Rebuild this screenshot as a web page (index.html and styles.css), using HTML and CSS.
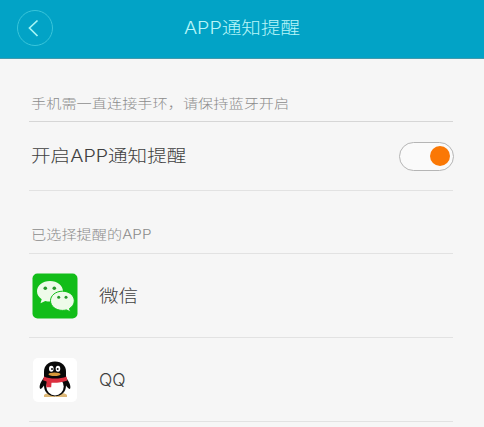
FILE: index.html
```html
<!DOCTYPE html>
<html lang="zh-CN">
<head>
<meta charset="utf-8">
<title>APP通知提醒</title>
<link rel="stylesheet" href="styles.css">
</head>
<body>
<header class="header">
  <svg class="back" viewBox="0 0 38 38"><circle cx="19" cy="19" r="17.5"/><path d="M21.5 11.5 13.5 19l8 8"/></svg>
  <h1 class="title"><span class="text">APP通知提醒</span></h1>
</header>
<main class="content">
  <p class="hint"><span class="text">手机需一直连接手环，请保持蓝牙开启</span></p>
  <div class="row setting"><span class="text">开启APP通知提醒</span><span class="toggle"><span class="knob"></span></span></div>
  <h2 class="section"><span class="text">已选择提醒的APP</span></h2>
  <div class="row app">
    <svg class="icon" viewBox="0 0 46 46">
      <rect x=".5" y=".5" width="45" height="45" rx="5" fill="#12bd19"/>
      <path d="M18 8C10.500 8 5 12.500 5 18.300c0 3.500 1.800 6 4.700 7.900l-1.200 4 4.800-2.300c1.500.4 3 .6 4.700.6 7.300 0 13-4.500 13-10.200S25.300 8 18 8z" fill="#eefbe9"/>
      <path d="M30.500 18.200c-6.700 0-12 4.200-12 9.600s5.300 9.600 12 9.600c1.400 0 2.700-.2 4-.5l4 2-1-3.400c3-1.800 4.800-4.500 4.800-7.700 0-5.400-5.200-9.600-11.800-9.600z" fill="#eefbe9" stroke="#12bd19"/>
      <g fill="#27972b"><circle cx="13.300" cy="15.300" r="1.800"/><circle cx="22.300" cy="15.300" r="1.800"/><circle cx="26.700" cy="24.300" r="1.500"/><circle cx="34" cy="24.300" r="1.500"/></g>
    </svg>
    <span class="text">微信</span>
  </div>
  <div class="row app">
    <svg class="icon" viewBox="0 0 46 46">
      <rect x="1" y="1" width="44" height="44" rx="5" fill="#fff"/>
      <path d="M12 38c2-2.500 7-2.500 10.500 0l1 2H12zM35 38c-2-2.500-7-2.500-10.500 0l-1 2H35z" fill="#ddb877"/>
      <path d="M12.500 20C9 24 6.800 29 8 31.500c.9 1.300 2.500-.8 4-3 0 6.500 4.500 10.800 11 10.800s11-4.300 11-10.800c1.500 2.200 3.300 4.300 4.200 3 1-2.500-1.200-7.500-4.700-11.500z" fill="#090909"/>
      <ellipse cx="23" cy="29.500" rx="8.700" ry="8.900" fill="#fff"/>
      <path d="M23 4.500C16 4.500 12 9 12 14.500V20c5 4 17 4 22 0v-5.500C34 9 30 4.500 23 4.500z" fill="#090909"/>
      <ellipse cx="19.300" cy="11.800" rx="2.300" ry="3" fill="#fff"/><ellipse cx="26" cy="11.800" rx="2.300" ry="3" fill="#fff"/>
      <circle cx="20" cy="12" r="1" fill="#111"/><circle cx="25.700" cy="12" r="1" fill="#111"/>
      <ellipse cx="22.500" cy="17.300" rx="6" ry="1.800" fill="#d99a3a"/>
      <path d="M12 19.500c6 2.700 16 2.700 22.500 0l.8 4c-5 2-10.500 2.500-15.800 2.300l-.3 4.500h-5l.4-5.800-3.600-1.300z" fill="#dc2f3f"/>
    </svg>
    <span class="text latin">QQ</span>
  </div>
</main>
</body>
</html>
```

FILE: styles.css
```css
* { box-sizing: border-box; }
body {
  margin: 0;
  height: 427px;
  overflow: hidden;
  background: #f6f6f6;
  color: #404040;
  font-family: Inter, "Noto Sans CJK SC", sans-serif;
  font-weight: 300;
}
h1, h2, p { margin: 0; font-weight: 300; }
.text {
  display: inline-block;
  line-height: 24px;
  white-space: nowrap;
  transform: scaleY(.86);
}
.header {
  display: grid;
  grid-template-columns: 68px 1fr 68px;
  align-items: center;
  height: 59px;
  padding-bottom: 3px;
  background: #02a3c6;
  border-bottom: 1px solid #4299ac;
}
.back {
  width: 38px;
  height: 38px;
  margin-left: 16px;
  fill: none;
  stroke: #39c5da;
}
.back path { stroke: #a5f5f5; stroke-width: 1.7; }
.title {
  font-size: 19.6px;
  color: #b8f5f8;
  text-align: center;
}
.content { padding: 0 31px 0 29px; }
.hint, .section, .row {
  display: flex;
  align-items: center;
  border-bottom: 1px solid #e2e2e2;
}
.hint, .section {
  padding-left: 2px;
  font-size: 15.2px;
  color: #8c8c8c;
}
.hint {
  height: 63px;
  padding-top: 27px;
  border-color: #d6d6d6;
}
.section {
  height: 63px;
  padding-top: 25px;
}
.row { font-size: 19.6px; }
.setting {
  height: 69px;
  justify-content: space-between;
  padding-left: 2px;
}
.toggle {
  display: flex;
  align-items: center;
  justify-content: flex-end;
  width: 55px;
  height: 29px;
  margin-right: -1px;
  padding-right: 3px;
  border: 1px solid #b5b5b5;
  border-radius: 15px;
  background: #fafafa;
}
.knob {
  width: 20px;
  height: 20px;
  border-radius: 50%;
  background: #fa7805;
}
.app {
  height: 84px;
  padding-left: 3px;
  gap: 21px;
}
.icon { width: 46px; height: 46px; }
.latin { font-size: 17.5px; transform: none; }
```
